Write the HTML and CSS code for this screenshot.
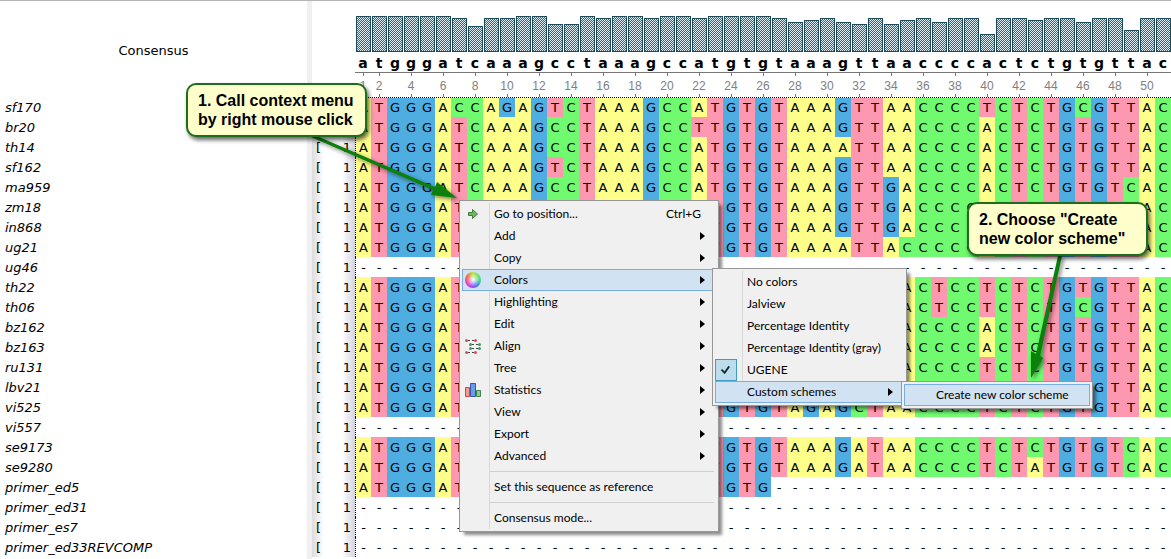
FILE: index.html
```html
<!DOCTYPE html>
<html lang="en">
<head>
<meta charset="utf-8">
<title>Alignment Editor</title>
<link rel="stylesheet" href="styles.css">
</head>
<body>
<main class="editor">
  <section class="names">
    <h1 class="names-title">Consensus</h1>
    <ul class="name-list" id="names"></ul>
  </section>
  <div class="splitter"></div>
  <section class="offsets">
    <div class="offset-list" id="offsets"></div>
  </section>
  <section class="alignment">
    <div class="histogram" id="histogram"></div>
    <div class="consensus" id="consensus"></div>
    <div class="ruler" id="ruler"></div>
    <div class="sequences" id="sequences"></div>
  </section>
</main>

<nav class="menu menu-main" aria-label="Context menu">
  <button class="item"><svg class="icon" viewBox="0 0 18 18"><path d="M4.500 7.500h4v-3l5 4.500-5 4.500v-3h-4z" fill="#74b95f" stroke="#3c7d3a"/></svg><span>Go to position...</span><kbd>Ctrl+G</kbd></button>
  <button class="item more"><span>Add</span></button>
  <button class="item more"><span>Copy</span></button>
  <button class="item more active"><i class="icon wheel"></i><span>Colors</span></button>
  <button class="item more"><span>Highlighting</span></button>
  <button class="item more"><span>Edit</span></button>
  <button class="item more"><svg class="icon" viewBox="0 0 18 18"><path d="M4 3.500h2M8 3.500h2M8 7.500h2M12 7.500h2M8 11.500h2M12 11.500h2M4 15.500h2M8 15.500h2" stroke="#444"/><g fill="#d0525c"><circle cx="2.500" cy="3.500" r="1.500"/><circle cx="11.500" cy="3.500" r="1.500"/><circle cx="2.500" cy="15.500" r="1.500"/><circle cx="11.500" cy="15.500" r="1.500"/></g><g fill="#3f9a6a"><circle cx="6.500" cy="7.500" r="1.500"/><circle cx="15.500" cy="7.500" r="1.500"/><circle cx="6.500" cy="11.500" r="1.500"/><circle cx="15.500" cy="11.500" r="1.500"/></g></svg><span>Align</span></button>
  <button class="item more"><span>Tree</span></button>
  <button class="item more"><svg class="icon" viewBox="0 0 18 18"><path d="M1.500 6.500h4v9h-4z" fill="#f59a8a" stroke="#cf4a40"/><path d="M6.500 2.500h5v13h-5z" fill="#6c9be8" stroke="#3457ae"/><path d="M12.500 9.500h4v6h-4z" fill="#8ccb8c" stroke="#3f8650"/></svg><span>Statistics</span></button>
  <button class="item more"><span>View</span></button>
  <button class="item more"><span>Export</span></button>
  <button class="item more"><span>Advanced</span></button>
  <hr>
  <button class="item"><span>Set this sequence as reference</span></button>
  <hr>
  <button class="item"><span>Consensus mode...</span></button>
</nav>

<nav class="menu menu-colors" aria-label="Colors">
  <button class="item"><span>No colors</span></button>
  <button class="item"><span>Jalview</span></button>
  <button class="item"><span>Percentage Identity</span></button>
  <button class="item"><span>Percentage Identity (gray)</span></button>
  <button class="item"><svg class="check" viewBox="0 0 22 22"><path d="M6 10.500l3.500 3.500 5-7" fill="none" stroke="#12303c" stroke-width="2"/></svg><span>UGENE</span></button>
  <button class="item more active"><span>Custom schemes</span></button>
</nav>

<nav class="menu menu-custom" aria-label="Custom schemes">
  <button class="item active"><span>Create new color scheme</span></button>
</nav>

<svg class="arrow arrow-first" viewBox="0 0 150 70"><path d="M2 2L10 2L126 52L128 47L148 63L122 60L124 55Z" fill="#0b800b"/></svg>
<svg class="arrow arrow-second" viewBox="0 0 40 126"><path d="M32 2L36 2L14 102L17 104L5 124L5 97L10 100Z" fill="#0b800b"/></svg>
<p class="callout callout-first">1. Call context menu<br>by right mouse click</p>
<p class="callout callout-second">2. Choose "Create<br>new color scheme"</p>
<script src="app.js"></script>
</body>
</html>
```
FILE: styles.css
```css
* { box-sizing: border-box; }
body {
  margin: 0;
  height: 100vh;
  overflow: hidden;
  background: #fff;
  color: #000;
  font: 13px/22px "DejaVu Sans", Verdana, sans-serif;
}
.editor { display: flex; min-height: 100vh; border-top: 1px solid #b4b4b4; }

.names { flex: 0 0 307px; }
.names-title {
  margin: 0;
  height: 96px;
  font-size: 13px;
  font-weight: 400;
  line-height: 100px;
  text-align: center;
}
.name-list { margin: 0; padding: 0 5px; list-style: none; font-style: italic; }
.name-list li { height: 20px; }
.splitter { flex: 0 0 5px; background: #f0f0f0; }

.offsets { flex: 0 0 43px; padding-top: 96px; }
.offset-list { background: linear-gradient(90deg, #dcdce0, #fff 12px, #fff 30px, #d4d4de); }
.offset { display: flex; justify-content: space-between; height: 20px; padding: 0 4px; }

.alignment { flex: 1; min-width: 0; overflow: hidden; }
.histogram { display: flex; align-items: flex-end; height: 51px; }
.bar {
  flex: none;
  width: 15px;
  margin-left: 1px;
  border: 1px solid #1c4a5a;
  background: repeating-conic-gradient(#226c84 0 25%, #dcecf0 0 50%) 0 0 / 2px 2px;
}
.consensus { display: flex; height: 21px; font-size: 14px; font-weight: 700; border-bottom: 1px solid #777; }
.consensus span { flex: none; width: 16px; text-align: center; }
.ruler { display: flex; height: 24px; }
.mark {
  flex: none;
  display: flex;
  flex-direction: column;
  align-items: center;
  justify-content: space-between;
  width: 16px;
  color: #808080;
  font: 12px/16px "Liberation Sans", Arial, sans-serif;
}
.mark.on::before, .mark.on::after { content: ""; width: 1px; height: 3px; background: #777; }
.mark.on::before { margin-bottom: 2px; }
.sequences { border-top: 1px dotted #000; }
.row { display: flex; height: 20px; }
.row:first-child { height: 19px; line-height: 20px; }
.base { flex: none; width: 16px; text-align: center; }
.base:first-child { border-left: 1px dotted #000; }
.a { background: #ffff8a; }
.t { background: #fe97b0; }
.g { background: #4eade1; }
.c { background: #70fa70; }

.menu {
  position: absolute;
  padding: 2px;
  background: #f0f0f0;
  border: 1px solid #979797;
  box-shadow: 4px 4px 3px -1px rgba(0, 0, 0, 0.45);
  font: 12px/20px Lato, "Noto Sans", sans-serif;
}
.menu::before { content: ""; position: absolute; left: 29px; top: 2px; bottom: 2px; border-left: 1px solid #d8d8d8; }
.menu-main { left: 459px; top: 200px; width: 260px; }
.menu-colors { left: 712px; top: 268px; width: 195px; }
.menu-custom { left: 901px; top: 381px; width: 192px; }
.item {
  position: relative;
  display: flex;
  align-items: center;
  width: 100%;
  height: 22px;
  padding: 0 14px 0 31px;
  border: 1px solid transparent;
  background: none;
  color: #000;
  font: inherit;
  text-align: left;
  white-space: nowrap;
}
.item kbd { margin-left: auto; font: inherit; }
.item.active { background: #d1e2f2; border-color: #78aee5; }
.item.more { padding-right: 10px; }
.more::after {
  content: "";
  margin-left: auto;
  border: 4px solid transparent;
  border-left: 5px solid #000;
  border-right: 0;
}
.icon { position: absolute; left: 1px; top: 1px; width: 18px; height: 18px; }
.check { position: absolute; left: -1px; top: -1px; width: 22px; height: 22px; background: #bddcec; border: 1px solid #3c9cc8; }
.wheel {
  border: 1px solid transparent;
  border-radius: 50%;
  background: radial-gradient(circle, #fff 0, transparent 60%), conic-gradient(#b4e848, #40d890 25%, #4878f0 40%, #b040f0 55%, #f040a8 70%, #f06848 85%, #b4e848);
  background-clip: padding-box;
}
.menu hr { height: 1px; margin: 4px 2px 4px 28px; border: 0; background: #d0d0d0; }

.callout {
  position: absolute;
  margin: 0;
  padding: 6px 10px;
  border: 2px solid #1c6e1c;
  border-radius: 10px;
  background: #ffffcc;
  box-shadow: 2px 3px 4px rgba(0, 0, 0, 0.6);
  font: 700 16px/19px "Liberation Sans", Arial, sans-serif;
  white-space: nowrap;
}
.callout-first { left: 186px; top: 83px; width: 181px; }
.callout-second { left: 967px; top: 202px; width: 181px; }
.arrow { position: absolute; filter: drop-shadow(2px 2px 2px rgba(0, 0, 0, 0.5)); }
.arrow-first { left: 309px; top: 135px; width: 150px; height: 70px; }
.arrow-second { left: 1026px; top: 254px; width: 40px; height: 126px; }
```
FILE: app.js
```js
const consensus = "atgggatcaaagcctaaagccatgtgtaaagttaaccccactctgtgttac";
const heights = [36,36,36,36,36,36,34,26,34,34,36,36,28,28,36,34,36,36,34,36,36,34,36,36,36,36,34,30,32,34,30,28,34,28,32,34,30,34,34,18,34,34,32,34,34,30,34,34,22,34,34];
const gaps = "-".repeat(51);
const head = "ATGGGATCAAAGCCTAAAGCCAT";
const sequences = [
  ["sf170", "ATGGGACCAGAGTCTAAAGCCATGTGTAAAGTTAACCCCTCTCTGCGTTAC"],
  ["br20", "ATGGGATCAAAGCCTAAAGCCTTGTGTAAAGTTAACCCCACTCTGTGTTAC"],
  ["th14", head + "GTGTAAAATTAACCCCACTCTGTGTTAC"],
  ["sf162", "ATGGGATCAAAGTCTAAAGCCATGTGTAAAGTTAACCCCACTCTGTGTTAC"],
  ["ma959", head + "GTGTAAAGTTGACCCCACTCTGTGTCAC"],
  ["zm18", head + "GTGTAAAGTTGACCCCACTCTGTGTCAC"],
  ["in868", head + "GTGTAAAGTTGACCCCACTCTGTGTCAC"],
  ["ug21", head + "GTGTAAAATTACCCCCACTCTGTGTTAC"],
  ["ug46", gaps],
  ["th22", head + "GTGTAAAGTTAACTCCTCTCTGTGTTAC"],
  ["th06", head + "GTGTAAAGTTAACTCCTCTCTGCGTTAC"],
  ["bz162", head + "GTGTAAAGTTAACCCCACTCTGTGTTAC"],
  ["bz163", head + "GTGTAAAGTTAACCCCACTCTGTGTTAC"],
  ["ru131", head + "GTGTAAAGTTAACCCCTCTCTGTGTTAC"],
  ["lbv21", head + "GTGTAAAGTTAACCCCTCTCTGTGTTAC"],
  ["vi525", head + "GTGTAGAGCTAACCCCTCTCTGTGTTAC"],
  ["vi557", gaps],
  ["se9173", head + "GTGTAAAGATAACCCCTCTCTGTGTCAC"],
  ["se9280", head + "GTGTAAAGATAACCCCTCTATGTGTCAC"],
  ["primer_ed5", head + "GTG" + "-".repeat(25)],
  ["primer_ed31", gaps],
  ["primer_es7", gaps],
  ["primer_ed33REVCOMP", gaps]
];
const fill = (id, html) => { document.getElementById(id).innerHTML = html; };

fill("names", sequences.map(([name]) => `<li>${name}</li>`).join(""));
fill("offsets", sequences.map(() => `<div class="offset"><span>[</span><span>1</span></div>`).join(""));
fill("histogram", heights.map(h => `<div class="bar" style="height:${h}px"></div>`).join(""));
fill("consensus", [...consensus].map(b => `<span>${b}</span>`).join(""));
fill("ruler", heights.map((_, i) => {
  const n = i + 1;
  return n === 1 || n % 2 === 0 ? `<div class="mark on">${n}</div>` : `<div class="mark"></div>`;
}).join(""));
fill("sequences", sequences.map(([, bases]) =>
  `<div class="row">${[...bases].map(b => `<span class="base ${b === "-" ? "gap" : b.toLowerCase()}">${b}</span>`).join("")}</div>`
).join(""));
```
